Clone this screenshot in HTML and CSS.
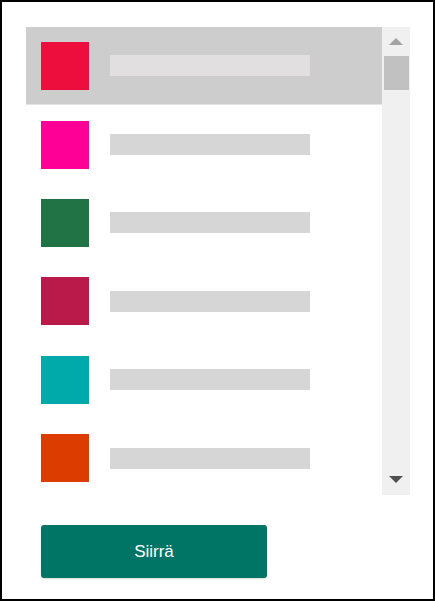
FILE: index.html
```html
<!DOCTYPE html>
<html lang="fi">
<head>
    <meta charset="UTF-8">
    <meta name="viewport" content="width=device-width, initial-scale=1.0">
    <title>Siirrä</title>
    <link rel="stylesheet" href="styles.css">
</head>
<body>

    <div class="ikkuna">
        <div class="lista-alue">
            <div class="lista">
                <div class="rivi valittu">
                    <span class="vari" style="background-color: #ee0e3e;"></span>
                    <span class="nimi"></span>
                </div>
                <div class="rivi">
                    <span class="vari" style="background-color: #ff0097;"></span>
                    <span class="nimi"></span>
                </div>
                <div class="rivi">
                    <span class="vari" style="background-color: #217346;"></span>
                    <span class="nimi"></span>
                </div>
                <div class="rivi">
                    <span class="vari" style="background-color: #b91a4a;"></span>
                    <span class="nimi"></span>
                </div>
                <div class="rivi">
                    <span class="vari" style="background-color: #00aaab;"></span>
                    <span class="nimi"></span>
                </div>
                <div class="rivi">
                    <span class="vari" style="background-color: #dc3c00;"></span>
                    <span class="nimi"></span>
                </div>
            </div>
            <div class="vierityspalkki">
                <span class="nuoli ylos"></span>
                <span class="peukalo"></span>
                <span class="tyhja"></span>
                <span class="nuoli alas"></span>
            </div>
        </div>
        <button class="siirra">Siirrä</button>
    </div>

</body>
</html>
```

FILE: styles.css
```css
body {
    margin: 0;
    font-family: 'Liberation Sans', Arial, sans-serif;
    background-color: #ffffff;
}
.ikkuna {
    box-sizing: border-box;
    width: 435px;
    height: 601px;
    border: 2px solid #000000;
    padding: 25px 0 0 24px;
    display: flex;
    flex-direction: column;
    align-items: flex-start;
}
.lista-alue {
    display: flex;
    width: 384px;
    height: 468px;
}
.lista {
    flex: 1;
    overflow: hidden;
}
.rivi {
    box-sizing: border-box;
    height: 78.4px;
    padding-left: 15px;
    display: flex;
    align-items: center;
    gap: 21px;
}
.rivi.valittu {
    background-color: #cdcdcd;
    border-bottom: 1px solid #e4e4e4;
}
.vari {
    width: 48px;
    height: 48px;
    flex-shrink: 0;
}
.nimi {
    width: 200px;
    height: 21px;
    background-color: #d6d6d6;
}
.valittu .nimi {
    background-color: #e1dfdf;
}
.vierityspalkki {
    width: 28px;
    background-color: #f0f0f0;
    display: flex;
    flex-direction: column;
    align-items: center;
}
.nuoli {
    width: 0;
    height: 0;
    border-left: 7px solid transparent;
    border-right: 7px solid transparent;
}
.nuoli.ylos {
    margin-top: 11px;
    border-bottom: 7px solid #a3a3a3;
}
.nuoli.alas {
    margin-bottom: 12px;
    border-top: 7px solid #505050;
}
.peukalo {
    margin-top: 11px;
    width: 25px;
    height: 34px;
    background-color: #c1c1c1;
}
.tyhja {
    flex: 1;
}
.siirra {
    margin: 30px 0 0 15px;
    width: 226px;
    height: 53px;
    border: none;
    border-radius: 3px;
    background-color: #007566;
    color: #ffffff;
    font-family: 'Liberation Sans', Arial, sans-serif;
    font-size: 17px;
    box-shadow: 0 1px 2px rgba(0, 0, 0, 0.15);
    cursor: pointer;
}
```
